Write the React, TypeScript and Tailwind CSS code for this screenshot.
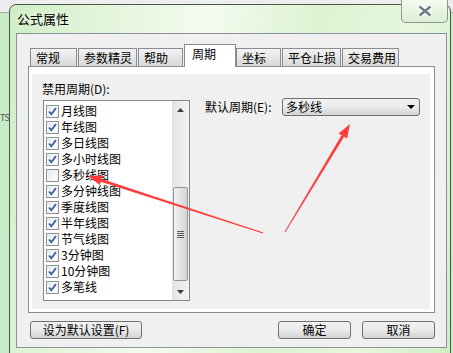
const periods: { label: string; checked: boolean }[] = [
  { label: "月线图", checked: true },
  { label: "年线图", checked: true },
  { label: "多日线图", checked: true },
  { label: "多小时线图", checked: true },
  { label: "多秒线图", checked: false },
  { label: "多分钟线图", checked: true },
  { label: "季度线图", checked: true },
  { label: "半年线图", checked: true },
  { label: "节气线图", checked: true },
  { label: "3分钟图", checked: true },
  { label: "10分钟图", checked: true },
  { label: "多笔线", checked: true },
];

const tabs = [
  { label: "常规", width: "w-[47px]" },
  { label: "参数精灵", width: "w-[59px]" },
  { label: "帮助", width: "w-[45px]" },
  { label: "周期", width: "w-[52px]", active: true },
  { label: "坐标", width: "w-[45px]" },
  { label: "平仓止损", width: "w-[59px]" },
  { label: "交易费用", width: "w-[57px]" },
];

function CheckBox({ checked }: { checked: boolean }) {
  return (
    <div className="flex h-[13px] w-[13px] shrink-0 items-center justify-center border border-[#8f8f8f] bg-gradient-to-br from-[#dcdcdc] to-[#fbfbfb]">
      <div className="flex h-[11px] w-[11px] items-center justify-center border border-[#f4f4f4] bg-gradient-to-br from-[#e6ebf3] to-[#ffffff]">
        {checked && (
          <svg width="9" height="9" viewBox="0 0 9 9">
            <path d="M1 4.5 L3.3 7.2 L8 1" fill="none" stroke="#3f5b9c" strokeWidth="1.8" />
          </svg>
        )}
      </div>
    </div>
  );
}

function WinButton({ label, width }: { label: string; width: string }) {
  return (
    <button
      type="button"
      className={`${width} flex h-[18px] items-center justify-center rounded-[3px] border border-[#707070] bg-gradient-to-b from-[#f2f2f2] via-[#ebebeb] to-[#d2d2d2] text-[12px] leading-none text-black`}
    >
      {label}
    </button>
  );
}

export default function App() {
  return (
    <div className="relative flex h-[353px] w-[453px] overflow-hidden bg-[linear-gradient(to_bottom,#eeeeee_0px,#eeeeee_12px,#a9a9a9_12px,#a9a9a9_13px,#c7ebc7_13px)] font-['Noto_Sans_CJK_SC',sans-serif] text-[12px] text-black">
      <div className="w-[9px] shrink-0">
        <div className="mt-[110px] text-[9px] leading-4 tracking-tighter text-[#555]">TS</div>
      </div>

      <div className="mt-[4px] flex h-[360px] w-[442px] shrink-0 flex-col rounded-t-[7px] border border-[#4a564a] bg-[linear-gradient(100deg,#cfeec4_0%,#e6f6de_22%,#f4fbef_40%,#dcf3d2_62%,#e7f7df_82%,#d0eec4_100%)]">
        <div className="flex h-[28px] items-start justify-between">
          <span className="pl-[7px] pt-[6px] text-[13px] leading-4 [text-shadow:0_0_6px_#ffffff]">公式属性</span>
          <div className="-mt-[5px] mr-[2px] flex h-[23px] w-[47px] items-center justify-center rounded-b-[5px] border border-t-0 border-[#8c9a8c] bg-gradient-to-b from-[#f3faf0] to-[#dcefd4]">
            <svg width="16" height="12" viewBox="0 0 16 12">
              <path d="M2 1 L14 11 M14 1 L2 11" stroke="#ffffff" strokeWidth="5" />
              <path d="M2.5 1.5 L13.5 10.5 M13.5 1.5 L2.5 10.5" stroke="#6f7d86" strokeWidth="2.6" />
            </svg>
          </div>
        </div>

        <div className="ml-[6px] flex h-[315px] w-[431px] flex-col border border-[#8b9199] bg-[#f0f0f0] px-[11px] pt-[10px]">
          <div className="flex h-[22px] items-end pl-[2px]">
            {tabs.map((tab) =>
              tab.active ? (
                <div
                  key={tab.label}
                  className={`${tab.width} relative z-10 -mb-[1px] h-[23px] border border-b-0 border-[#898c95] bg-white pl-[7px] pt-[1px] leading-4`}
                >
                  {tab.label}
                </div>
              ) : (
                <div
                  key={tab.label}
                  className={`${tab.width} mr-[1px] h-[18px] border border-b-0 border-[#898c95] bg-gradient-to-b from-[#f3f3f3] to-[#d8d8d8] pl-[5px] pt-[1px] leading-4`}
                >
                  {tab.label}
                </div>
              ),
            )}
          </div>

          <div className="flex h-[247px] w-[407px] flex-col border border-[#898c95] bg-white pb-[3px] pl-[3px] pr-[4px] pt-[7px]">
            <div className="flex flex-1 bg-[#f0f0f0]">
              <div className="flex flex-col pl-[10px] pt-[7px]">
                <span className="leading-4">禁用周期(D):</span>
                <div className="ml-[1px] mt-[3px] flex h-[201px] w-[147px] border border-[#828790] bg-white">
                  <div className="flex flex-1 flex-col pl-[2px] pt-[2px]">
                    {periods.map((p) => (
                      <div key={p.label} className="flex h-[16px] items-center gap-[2px]">
                        <CheckBox checked={p.checked} />
                        <span className="leading-4">{p.label}</span>
                      </div>
                    ))}
                  </div>
                  <div className="flex w-[17px] flex-col bg-gradient-to-r from-[#e3e3e3] to-[#f3f3f3]">
                    <div className="flex h-[17px] items-center justify-center">
                      <svg width="7" height="4" viewBox="0 0 7 4">
                        <path d="M0 4 L3.5 0 L7 4 Z" fill="#3d3d3d" />
                      </svg>
                    </div>
                    <div className="flex-1">
                      <div className="ml-[1px] mt-[69px] flex h-[94px] w-[15px] flex-col items-center justify-center gap-[1px] rounded-[2px] border border-[#959595] bg-gradient-to-r from-[#f2f2f2] to-[#d4d4d4]">
                        <div className="h-[1px] w-[7px] bg-[#5a5a5a]" />
                        <div className="h-[1px] w-[7px] bg-[#5a5a5a]" />
                        <div className="h-[1px] w-[7px] bg-[#5a5a5a]" />
                        <div className="h-[1px] w-[7px] bg-[#5a5a5a]" />
                      </div>
                    </div>
                    <div className="flex h-[17px] items-center justify-center">
                      <svg width="7" height="4" viewBox="0 0 7 4">
                        <path d="M0 0 L3.5 4 L7 0 Z" fill="#3d3d3d" />
                      </svg>
                    </div>
                  </div>
                </div>
              </div>

              <div className="ml-[15px] flex h-fit items-center pt-[24px]">
                <span className="w-[77px] leading-4">默认周期(E):</span>
                <div className="flex h-[18px] w-[138px] items-center justify-between rounded-[3px] border border-[#707070] bg-gradient-to-b from-[#f2f2f2] via-[#ebebeb] to-[#d4d4d4] pl-[3px] pr-[4px]">
                  <span className="leading-4">多秒线</span>
                  <svg width="8" height="4" viewBox="0 0 8 4">
                    <path d="M0 0 L8 0 L4 4 Z" fill="#000000" />
                  </svg>
                </div>
              </div>
            </div>
          </div>

          <div className="mt-[8px] flex items-center pl-[2px]">
            <WinButton label="设为默认设置(F)" width="w-[112px]" />
            <div className="ml-auto flex gap-[11px]">
              <WinButton label="确定" width="w-[73px]" />
              <WinButton label="取消" width="w-[73px]" />
            </div>
          </div>
        </div>
      </div>

      <svg className="pointer-events-none absolute left-0 top-0" width="453" height="353" viewBox="0 0 453 353">
        <polygon points="263.2,232.5 262.8,233.5 100.8,181.7 101.8,178.9" fill="#ff3b3b" />
        <polygon points="88,176 102.9,175.5 99.8,185.1" fill="#ff3b3b" />
        <polygon points="285.4,232.3 284.6,231.7 341.5,135.2 344.1,136.8" fill="#ff3b3b" />
        <polygon points="350,124 347.1,138.6 338.5,133.4" fill="#ff3b3b" />
      </svg>
    </div>
  );
}
